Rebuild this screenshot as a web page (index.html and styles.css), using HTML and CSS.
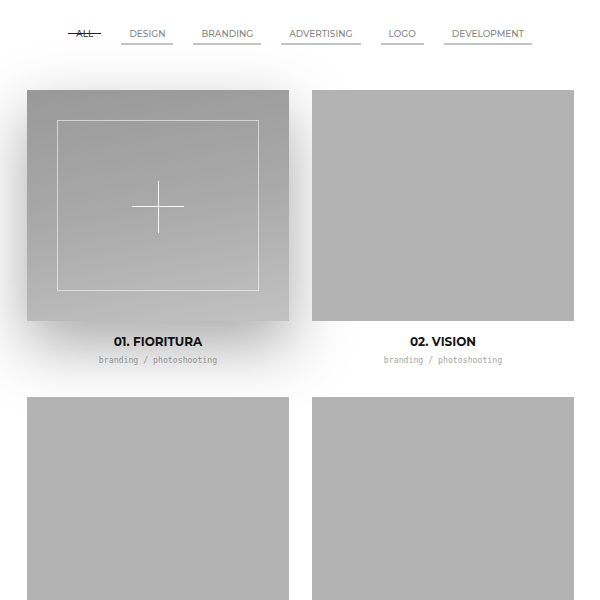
FILE: index.html
```html
<!DOCTYPE html>
<html>
<head>
<meta charset="utf-8">
<link rel="stylesheet" href="styles.css">
</head>
<body>
<nav class="filters">
  <a class="filter active">ALL</a>
  <a class="filter">DESIGN</a>
  <a class="filter">BRANDING</a>
  <a class="filter">ADVERTISING</a>
  <a class="filter">LOGO</a>
  <a class="filter">DEVELOPMENT</a>
</nav>
<main class="grid">
  <article class="item hovered">
    <div class="thumb">
      <div class="frame"><span class="plus"></span></div>
    </div>
    <h3 class="title">01. FIORITURA</h3>
    <p class="tags">branding / photoshooting</p>
  </article>
  <article class="item">
    <div class="thumb"></div>
    <h3 class="title">02. VISION</h3>
    <p class="tags">branding / photoshooting</p>
  </article>
  <article class="item">
    <div class="thumb"></div>
  </article>
  <article class="item">
    <div class="thumb"></div>
  </article>
</main>
</body>
</html>
```
FILE: styles.css
```css
* { box-sizing: border-box; }
html, body { margin: 0; padding: 0; background: #fff; overflow: hidden; }
body { font-family: "Montserrat", "Open Sans", sans-serif; }

.filters {
  display: flex;
  justify-content: center;
  gap: 20px;
  padding-top: 26px;
  height: 90px;
}
.filter {
  position: relative;
  display: block;
  height: 19px;
  padding: 0 8px;
  font-size: 9px;
  font-weight: 500;
  letter-spacing: 0;
  line-height: 15px;
  color: #858585;
  border-bottom: 2px solid #c4c4c4;
}
.filter.active {
  color: #333;
  border-bottom-color: transparent;
}
.filter.active::after {
  content: "";
  position: absolute;
  left: 0;
  right: 0;
  top: 7px;
  height: 1px;
  background: #222;
}

.grid {
  display: grid;
  grid-template-columns: 262px 262px;
  column-gap: 23px;
  margin-left: 27px;
}
.item { position: relative; height: 307px; text-align: center; }
.thumb {
  position: relative;
  height: 231px;
  background: #b3b3b3;
}
.hovered .thumb {
  background: linear-gradient(170deg, #999 0%, #a9a9a9 50%, #c2c2c2 100%);
  box-shadow: 0 24px 60px rgba(0, 0, 0, 0.34);
}
.frame {
  position: absolute;
  inset: 30px;
  border: 1px solid rgba(255, 255, 255, 0.55);
}
.plus {
  position: absolute;
  left: 50%;
  top: 50%;
  width: 52px;
  height: 52px;
  margin: -25px 0 0 -26px;
}
.plus::before, .plus::after {
  content: "";
  position: absolute;
  background: rgba(255, 255, 255, 0.9);
}
.plus::before { left: 0; right: 0; top: 25px; height: 1px; }
.plus::after { top: 0; bottom: 0; left: 26px; width: 1px; }

.title {
  margin: 13px 0 0;
  font-family: "Montserrat", "Lato", sans-serif;
  font-size: 12px;
  font-weight: 700;
  letter-spacing: 0;
  color: #151515;
  line-height: 16px;
}
.tags {
  margin: 4px 0 0;
  font-family: "DejaVu Sans Mono", monospace;
  font-size: 8.2px;
  color: #a5a5a5;
  line-height: 12px;
}
```
